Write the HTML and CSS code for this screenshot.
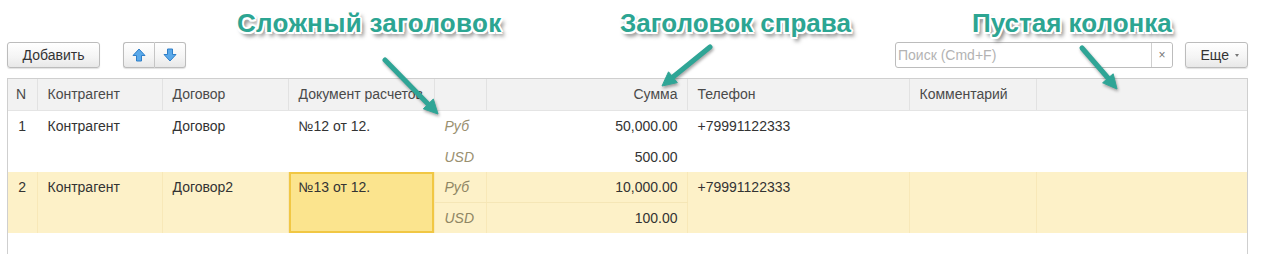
FILE: index.html
```html
<!DOCTYPE html>
<html lang="ru">
  <head>
    <meta charset="UTF-8" />
    <title>Список</title>
    <link rel="stylesheet" href="styles.css">
  </head>
  <body>
    <div class="page">
      <div class="toolbar">
        <button class="btn btn-add">Добавить</button>
        <div class="btn-group">
          <button class="btn btn-icon" title="Вверх">
            <svg width="14" height="14" viewBox="0 0 14 14">
              <path d="M7 1 L13 7.5 L9.5 7.5 L9.5 13 L4.5 13 L4.5 7.5 L1 7.5 Z" fill="#5aa9ea" stroke="#2f7fc8" stroke-width="1" stroke-linejoin="round"/>
            </svg>
          </button>
          <button class="btn btn-icon" title="Вниз">
            <svg width="14" height="14" viewBox="0 0 14 14">
              <path d="M7 13 L13 6.5 L9.5 6.5 L9.5 1 L4.5 1 L4.5 6.5 L1 6.5 Z" fill="#5aa9ea" stroke="#2f7fc8" stroke-width="1" stroke-linejoin="round"/>
            </svg>
          </button>
        </div>
        <div class="spacer"></div>
        <div class="search">
          <input class="search-input" type="text" placeholder="Поиск (Cmd+F)">
          <button class="search-clear">×</button>
        </div>
        <button class="btn btn-more">Еще <span class="caret"></span></button>
      </div>

      <div class="list">
        <table class="grid">
          <colgroup>
            <col style="width: 29px">
            <col style="width: 125px">
            <col style="width: 126px">
            <col style="width: 146px">
            <col style="width: 52px">
            <col style="width: 201px">
            <col style="width: 222px">
            <col style="width: 127px">
            <col style="width: 211px">
          </colgroup>
          <thead>
            <tr>
              <th>N</th>
              <th>Контрагент</th>
              <th>Договор</th>
              <th>Документ расчетов</th>
              <th></th>
              <th class="num">Сумма</th>
              <th>Телефон</th>
              <th>Комментарий</th>
              <th class="last"></th>
            </tr>
          </thead>
          <tbody>
            <tr class="sub-first">
              <td rowspan="2" class="row-no">1</td>
              <td rowspan="2">Контрагент</td>
              <td rowspan="2">Договор</td>
              <td rowspan="2">№12 от 12.</td>
              <td class="cur">Руб</td>
              <td class="num">50,000.00</td>
              <td rowspan="2">+79991122333</td>
              <td rowspan="2"></td>
              <td rowspan="2" class="last"></td>
            </tr>
            <tr>
              <td class="cur">USD</td>
              <td class="num">500.00</td>
            </tr>
            <tr class="sub-first current">
              <td rowspan="2" class="row-no">2</td>
              <td rowspan="2">Контрагент</td>
              <td rowspan="2">Договор2</td>
              <td rowspan="2" class="selected">№13 от 12.</td>
              <td class="cur">Руб</td>
              <td class="num">10,000.00</td>
              <td rowspan="2">+79991122333</td>
              <td rowspan="2"></td>
              <td rowspan="2" class="last"></td>
            </tr>
            <tr class="current">
              <td class="cur">USD</td>
              <td class="num">100.00</td>
            </tr>
          </tbody>
        </table>
      </div>

      <!-- annotations over the screenshot -->
      <div class="note note-complex">Сложный заголовок</div>
      <div class="note note-right">Заголовок справа</div>
      <div class="note note-empty">Пустая колонка</div>

      <svg class="arrows" width="1280" height="254" viewBox="0 0 1280 254">
        <g fill="#2fa596" stroke="#2fa596">
          <line x1="385" y1="60" x2="428" y2="104" stroke-width="5" stroke-linecap="round"/>
          <polygon points="438,114 423.3,108.8 433.3,99" stroke-width="1" stroke-linejoin="round"/>

          <line x1="710" y1="47" x2="673" y2="77" stroke-width="5" stroke-linecap="round"/>
          <polygon points="662,86 668.5,71.8 677.3,82.6" stroke-width="1" stroke-linejoin="round"/>

          <line x1="1082" y1="48" x2="1108" y2="78" stroke-width="5" stroke-linecap="round"/>
          <polygon points="1117,89 1102.6,82.8 1113.2,73.8" stroke-width="1" stroke-linejoin="round"/>
        </g>
      </svg>
    </div>
  </body>
</html>
```

FILE: styles.css
```css
* {
  margin: 0;
  padding: 0;
  box-sizing: border-box;
}

body {
  font-family: 'Liberation Sans', Arial, sans-serif;
  font-size: 14px;
  color: #333;
  background: white;
}

.page {
  position: relative;
  width: 1280px;
  height: 254px;
  overflow: hidden;
  display: flex;
  flex-direction: column;
}

.toolbar {
  display: flex;
  align-items: center;
  padding: 42px 32px 0 7px;
  height: 68px;
}

.btn {
  height: 26px;
  border: 1px solid #bcbcbc;
  border-radius: 3px;
  background: linear-gradient(#ffffff 0%, #f4f4f4 60%, #e8e8e8 100%);
  box-shadow: 0 1px 1px rgba(0,0,0,0.12);
  font-family: inherit;
  font-size: 14px;
  color: #333;
  cursor: pointer;
}

.btn-add {
  width: 93px;
}

.btn-group {
  display: flex;
  margin-left: 23px;
}

.btn-icon {
  width: 32px;
  display: flex;
  align-items: center;
  justify-content: center;
}

.btn-group .btn-icon:first-child {
  border-radius: 3px 0 0 3px;
  border-right-color: #c8c8c8;
}

.btn-group .btn-icon:last-child {
  width: 31px;
  border-left: none;
  border-radius: 0 3px 3px 0;
}

.spacer {
  flex: 1;
}

.search {
  display: flex;
  height: 26px;
  width: 278px;
  border: 1px solid #bcbcbc;
  border-radius: 3px;
  background: white;
}

.search-input {
  flex: 1;
  min-width: 0;
  border: none;
  outline: none;
  padding: 0 2px;
  font-family: inherit;
  font-size: 14px;
  color: #333;
  background: transparent;
}

.search-input::placeholder {
  color: #b3b3b3;
}

.search-clear {
  width: 21px;
  border: none;
  border-left: 1px solid #cfcfcf;
  background: white;
  color: #777;
  font-family: inherit;
  font-size: 12px;
  border-radius: 0 3px 3px 0;
}

.btn-more {
  width: 63px;
  margin-left: 12px;
  display: flex;
  align-items: center;
  justify-content: flex-end;
  padding-right: 8px;
  gap: 6px;
}

.caret {
  width: 0;
  height: 0;
  border-left: 2.5px solid transparent;
  border-right: 2.5px solid transparent;
  border-top: 3px solid #777;
}

.list {
  flex: 1;
  margin: 10px 32px 0 7px;
  border: 1px solid #cfcfcf;
  border-bottom: none;
}

.grid {
  width: 1239px;
  table-layout: fixed;
  border-collapse: collapse;
}

.grid th {
  height: 31px;
  background: #f2f2f2;
  border-right: 1px solid #e2e2e2;
  border-bottom: 1px solid #e4e4e4;
  padding: 0 9px 0 10px;
  font-weight: normal;
  color: #4a4a4a;
  text-align: left;
  white-space: nowrap;
  overflow: hidden;
}

.grid th:first-child {
  padding-left: 8px;
}

.grid td {
  height: 30px;
  line-height: 30px;
  padding: 0 9px 0 10px;
  vertical-align: top;
  border-right: 1px solid #ffffff;
  white-space: nowrap;
  overflow: hidden;
}

.grid td.row-no {
  padding: 0;
  text-align: center;
}

.grid .sub-first td {
  height: 31px;
}

.grid .sub-first .cur,
.grid .sub-first .num {
  border-bottom: 1px solid #ffffff;
}

.grid .num {
  text-align: right;
}

.grid .cur {
  font-style: italic;
  color: #9a9070;
}

.grid .last {
  border-right: none;
}

.grid .current td {
  background: #fdf1c8;
  border-right-color: #f8e8b8;
}

.grid .current.sub-first .cur,
.grid .current.sub-first .num {
  border-bottom-color: #f5e6b6;
}

.grid .current .cur {
  color: #8f8664;
}

.grid td.selected {
  background: #fbe48e;
  box-shadow: inset 0 0 0 2px #f1c744;
}

.note {
  position: absolute;
  top: 10px;
  font-size: 26px;
  line-height: 26px;
  font-weight: bold;
  color: #2ca592;
  white-space: nowrap;
  text-shadow:
    2px 0 0 #fff, -2px 0 0 #fff, 0 2px 0 #fff, 0 -2px 0 #fff,
    1.5px 1.5px 0 #fff, -1.5px -1.5px 0 #fff, 1.5px -1.5px 0 #fff, -1.5px 1.5px 0 #fff,
    3px 4px 4px rgba(0,0,0,0.6);
}

.note-complex {
  left: 237px;
  letter-spacing: 0.3px;
}

.note-right {
  left: 620px;
}

.note-empty {
  left: 972px;
}

.arrows {
  position: absolute;
  left: 0;
  top: 0;
  pointer-events: none;
  filter: drop-shadow(1px 2px 1.5px rgba(0,0,0,0.35));
}
```
